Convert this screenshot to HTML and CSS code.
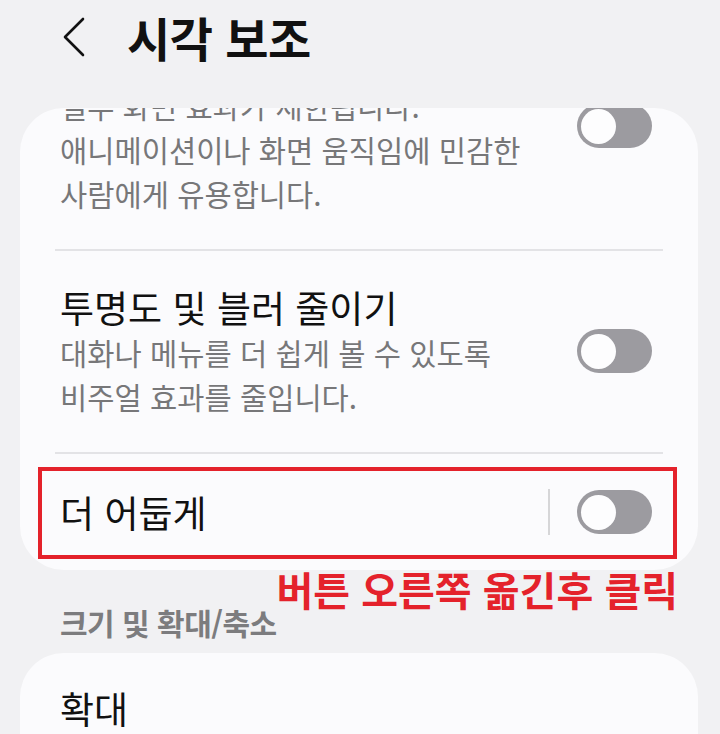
FILE: index.html
```html
<!DOCTYPE html>
<html lang="ko">
<head>
<meta charset="utf-8">
<title>시각 보조</title>
<link rel="stylesheet" href="styles.css">
</head>
<body>
  <header class="appbar">
    <svg class="back" width="24" height="40" viewBox="0 0 24 40" aria-hidden="true">
      <polyline points="21,2 3,20 21,38" fill="none" stroke="#111" stroke-width="2.6" stroke-linecap="round" stroke-linejoin="round"/>
    </svg>
    <h1 class="title">시각 보조</h1>
  </header>

  <section class="card card-first">
    <div class="card-scroll">
      <div class="item">
        <div class="item-text">
          <div class="item-desc">일부 화면 효과가 제한됩니다.<br>애니메이션이나 화면 움직임에 민감한<br>사람에게 유용합니다.</div>
        </div>
        <span class="toggle toggle-first"></span>
      </div>
      <div class="divider"></div>
      <div class="item">
        <div class="item-text">
          <div class="item-title">투명도 및 블러 줄이기</div>
          <div class="item-desc">대화나 메뉴를 더 쉽게 볼 수 있도록<br>비주얼 효과를 줄입니다.</div>
        </div>
        <span class="toggle"></span>
      </div>
      <div class="divider"></div>
      <div class="item item-dim">
        <div class="item-text">
          <div class="item-title">더 어둡게</div>
        </div>
        <span class="vline"></span>
        <span class="toggle"></span>
        <span class="annot-box"></span>
      </div>
    </div>
  </section>

  <div class="section-head">
    <span class="section-label">크기 및 확대/축소</span>
    <span class="annot-text">버튼 오른쪽 옮긴후 클릭</span>
  </div>

  <section class="card card-second">
    <div class="item item-last">
      <div class="item-text">
        <div class="item-title">확대</div>
      </div>
    </div>
  </section>
</body>
</html>
```

FILE: styles.css
```css
* {
  box-sizing: border-box;
}

html, body {
  margin: 0;
  padding: 0;
}

body {
  width: 720px;
  height: 734px;
  overflow: hidden;
  background: #f1f1f3;
  font-family: "Noto Sans CJK KR", "Noto Sans", sans-serif;
  color: #111;
}

.appbar {
  height: 108px;
  display: flex;
  align-items: center;
  padding: 0 0 34px 62px;
}

.back {
  display: block;
  margin-right: 41px;
}

.title {
  margin: 0;
  font-size: 47px;
  line-height: 54px;
  font-weight: 700;
  color: #111;
  letter-spacing: -0.5px;
}

.card {
  background: #fbfbfd;
  margin: 0 22px 0 20px;
  border-radius: 44px;
  overflow: hidden;
}

.card-first {
  height: 462px;
}

.card-scroll {
  margin-top: -56px;
}

.item {
  display: flex;
  align-items: center;
  padding: 32px 46px 33px 40px;
}

.item-text {
  flex: 1;
  min-width: 0;
}

.item-title {
  font-size: 37px;
  line-height: 48px;
  color: #111;
  white-space: nowrap;
}

.item-desc {
  font-size: 29.6px;
  line-height: 44px;
  color: #777779;
  white-space: nowrap;
}

.divider {
  height: 2px;
  margin: 0 35px;
  background: #e3e3e6;
}

.toggle {
  position: relative;
  flex: none;
  width: 75px;
  height: 44px;
  border-radius: 22px;
  background: #9c9ba0;
}

.toggle-first {
  align-self: flex-start;
  margin-top: 20px;
}

.toggle::after {
  content: "";
  position: absolute;
  left: 4px;
  top: 4.5px;
  width: 35px;
  height: 35px;
  border-radius: 50%;
  background: #fdfdfe;
}

.item-dim {
  position: relative;
  padding-top: 34px;
  padding-bottom: 34px;
}

.vline {
  flex: none;
  width: 2px;
  height: 46px;
  background: #d6d6d8;
  margin-right: 27px;
}

.annot-box {
  position: absolute;
  top: 13px;
  bottom: 11px;
  left: 18px;
  right: 21px;
  border: 4.5px solid #e4222b;
}

.section-head {
  position: relative;
  padding: 34px 60px 13px;
}

.section-label {
  display: block;
  font-size: 30px;
  line-height: 36px;
  font-weight: 700;
  color: #7c7c7e;
  letter-spacing: -0.5px;
}

.annot-text {
  position: absolute;
  top: -4px;
  right: 42px;
  font-size: 40px;
  line-height: 46px;
  font-weight: 700;
  color: #e4222b;
  white-space: nowrap;
}

.card-second {
  border-radius: 44px 44px 0 0;
  height: 120px;
}

.item-last {
  padding-top: 31px;
}
```
